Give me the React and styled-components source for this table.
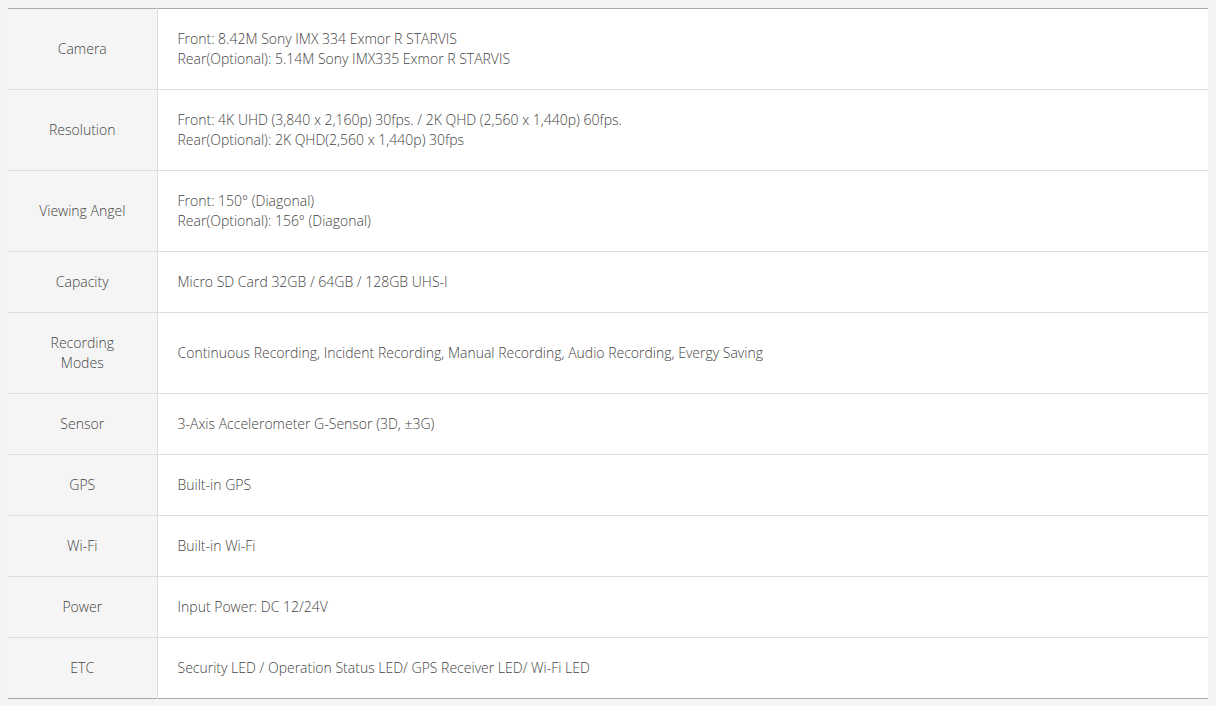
import React from "react";
import styled, {createGlobalStyle} from "styled-components";

const GlobalStyle = createGlobalStyle`
  body {
    margin: 8px;
    background: #f4f4f4;
    font-family: "Open Sans", "Liberation Sans", sans-serif;
  }
`;

const SpecTable = styled.table`
  width: 1200px;
  border-collapse: collapse;
  border-top: 1px solid #a9a9a9;
  border-bottom: 1px solid #a9a9a9;
  font-size: 14px;
  font-weight: 300;
  line-height: 20px;
  color: #444;
`;

const Row = styled.tr`
  border-bottom: 1px solid #dcdcdc;
  &:last-child {
    border-bottom: none;
  }
`;

const Label = styled.th`
  width: 149px;
  padding: 20px 10px;
  box-sizing: border-box;
  background: #f5f5f5;
  border-right: 1px solid #dcdcdc;
  font-weight: 300;
  text-align: center;
  vertical-align: middle;
`;

const Value = styled.td`
  padding: 20px 20px;
  background: #fff;
  text-align: left;
  vertical-align: middle;
`;

const specs = [
    {label: "Camera", lines: ["Front: 8.42M Sony IMX 334 Exmor R STARVIS", "Rear(Optional): 5.14M Sony IMX335 Exmor R STARVIS"]},
    {label: "Resolution", lines: ["Front: 4K UHD (3,840 x 2,160p) 30fps. / 2K QHD (2,560 x 1,440p) 60fps.", "Rear(Optional): 2K QHD(2,560 x 1,440p) 30fps"]},
    {label: "Viewing Angel", lines: ["Front: 150° (Diagonal)", "Rear(Optional): 156° (Diagonal)"]},
    {label: "Capacity", lines: ["Micro SD Card 32GB / 64GB / 128GB UHS-I"]},
    {label: ["Recording", "Modes"], lines: ["Continuous Recording, Incident Recording, Manual Recording, Audio Recording, Evergy Saving"]},
    {label: "Sensor", lines: ["3-Axis Accelerometer G-Sensor (3D, ±3G)"]},
    {label: "GPS", lines: ["Built-in GPS"]},
    {label: "Wi-Fi", lines: ["Built-in Wi-Fi"]},
    {label: "Power", lines: ["Input Power: DC 12/24V"]},
    {label: "ETC", lines: ["Security LED / Operation Status LED/ GPS Receiver LED/ Wi-Fi LED"]},
];

const withBreaks = (parts) =>
    [].concat(parts).map((p, i) => (
        <React.Fragment key={i}>
            {i > 0 && <br/>}
            {p}
        </React.Fragment>
    ));

export default function App() {
    return (
        <>
            <GlobalStyle/>
            <SpecTable>
                <tbody>
                {specs.map((s, i) => (
                    <Row key={i}>
                        <Label>{withBreaks(s.label)}</Label>
                        <Value>{withBreaks(s.lines)}</Value>
                    </Row>
                ))}
                </tbody>
            </SpecTable>
        </>
    );
}
